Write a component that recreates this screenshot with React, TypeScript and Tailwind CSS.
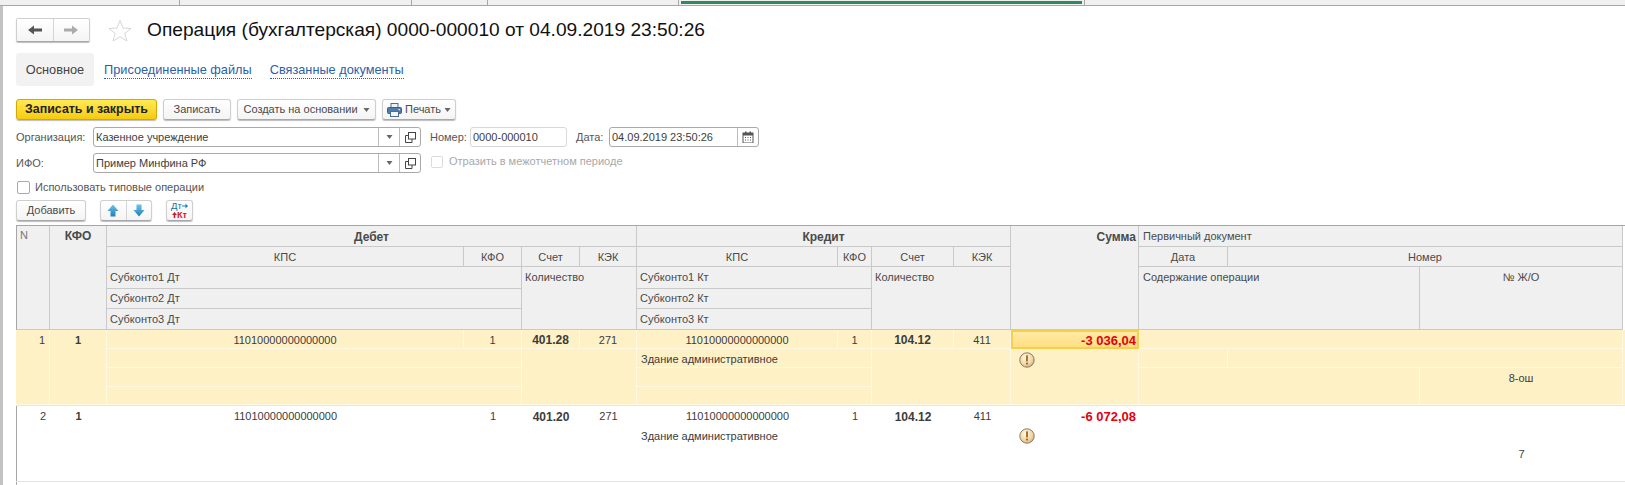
const gridCols = 'grid-cols-[34px_57px_357px_58px_58px_57px_201px_34px_82px_57px_128px_89px_192px_203px]';

const headCell = 'flex bg-[#f0f0f0] border-r border-b border-[#c9c9c9] text-[#4a4a4a] px-[4px] overflow-hidden whitespace-nowrap';

function Caret() {
  return (
    <svg width="7" height="4" viewBox="0 0 7 4" className="shrink-0">
      <path d="M0.5 0 L6.5 0 L3.5 4 Z" fill="#666" />
    </svg>
  );
}

function OpenIcon() {
  return (
    <svg width="11" height="11" viewBox="0 0 11 11" fill="none" stroke="#444" strokeWidth="1">
      <rect x="3.5" y="0.5" width="7" height="6.5" />
      <path d="M3.5 3.5 H0.5 V10.5 H7 V7" />
    </svg>
  );
}

function CalendarIcon() {
  return (
    <svg width="12" height="12" viewBox="0 0 12 12">
      <rect x="1" y="2" width="10" height="10" fill="#fff" stroke="#555" />
      <rect x="1" y="2" width="10" height="2.5" fill="#555" />
      <rect x="3" y="0.5" width="1.5" height="2.5" fill="#555" />
      <rect x="7.5" y="0.5" width="1.5" height="2.5" fill="#555" />
      <path d="M3 6 h1 v1 h-1z M5.5 6 h1 v1 h-1z M8 6 h1 v1 h-1z M3 8.5 h1 v1 h-1z M5.5 8.5 h1 v1 h-1z M8 8.5 h1 v1 h-1z" fill="#555" />
    </svg>
  );
}

function PrinterIcon() {
  return (
    <svg width="15" height="14" viewBox="0 0 15 14">
      <rect x="4" y="0.5" width="7" height="5" fill="#eef3f8" stroke="#4d6f94" />
      <rect x="0.5" y="4.5" width="14" height="6" rx="1" fill="#4f7eaa" stroke="#3b5f85" />
      <rect x="3.5" y="8.5" width="8" height="5" fill="#f5f5f5" stroke="#4d6f94" />
      <rect x="11.5" y="6" width="1.5" height="1.2" fill="#e8f0c0" />
    </svg>
  );
}

function WarnIcon() {
  return (
    <svg width="16" height="16" viewBox="0 0 16 16" className="ml-[4px] mt-[3px]">
      <defs>
        <radialGradient id="warnFill" cx="0.4" cy="0.35" r="0.75">
          <stop offset="0" stopColor="#fff8e6" />
          <stop offset="0.6" stopColor="#f0d7a6" />
          <stop offset="1" stopColor="#cfa468" />
        </radialGradient>
      </defs>
      <circle cx="8" cy="8" r="7.2" fill="url(#warnFill)" stroke="#8d7c62" strokeWidth="1" />
      <rect x="7.1" y="3.2" width="1.8" height="6.3" rx="0.6" fill="#a5641d" />
      <circle cx="8" cy="11.6" r="1.1" fill="#a5641d" />
    </svg>
  );
}

function BlockArrow({ down }: { down?: boolean }) {
  return (
    <svg width="12" height="13" viewBox="0 0 12 13">
      <defs>
        <linearGradient id={down ? 'arrowDown' : 'arrowUp'} x1="0" y1="0" x2="0" y2="1">
          <stop offset="0" stopColor="#6cc3ea" />
          <stop offset="1" stopColor="#1f7fb8" />
        </linearGradient>
      </defs>
      <path
        d={down ? 'M3.5 0.5 H8.5 V6 H11.5 L6 12.5 L0.5 6 H3.5 Z' : 'M6 0.5 L11.5 7 H8.5 V12.5 H3.5 V7 H0.5 Z'}
        fill={`url(#${down ? 'arrowDown' : 'arrowUp'})`}
      />
    </svg>
  );
}

function Button({ children, className }: { children: React.ReactNode; className: string }) {
  return (
    <div className={`flex items-center justify-center h-[21px] rounded-[3px] border border-[#cfcfcf] border-b-[#a8a8a8] bg-gradient-to-b from-white to-[#f4f4f4] shadow-[0_1px_1px_#bdbdbd] text-[#4a4a4a] ${className}`}>
      {children}
    </div>
  );
}

function SelectField({ value }: { value: string }) {
  return (
    <div className="flex w-[328px] h-[20px] rounded-[3px] border border-[#a9a9a9] bg-white text-[#3d3d3d]">
      <div className="flex-1 pl-[2px] leading-[18px]">{value}</div>
      <div className="flex w-[21px] items-center justify-center border-l border-[#bdbdbd]">
        <Caret />
      </div>
      <div className="flex w-[21px] items-center justify-center border-l border-[#bdbdbd]">
        <OpenIcon />
      </div>
    </div>
  );
}

function Header() {
  return (
    <div className={`grid ${gridCols} grid-rows-[21px_20px_22px_20px_21px] border-t border-[#a6a6a6]`}>
      <div className={`${headCell} col-start-1 row-start-1 row-span-5 border-l-[#a6a6a6] border-l pl-[3px] pt-[4px] text-[#777]`}>N</div>
      <div className={`${headCell} col-start-2 row-start-1 row-span-5 justify-center pt-[4px] font-bold text-[12px]`}>КФО</div>

      <div className={`${headCell} col-start-3 col-span-4 row-start-1 items-center justify-center pt-[1px] font-bold text-[12px]`}>Дебет</div>
      <div className={`${headCell} col-start-3 row-start-2 items-center justify-center pt-[1px]`}>КПС</div>
      <div className={`${headCell} col-start-4 row-start-2 items-center justify-center pt-[1px]`}>КФО</div>
      <div className={`${headCell} col-start-5 row-start-2 items-center justify-center pt-[1px]`}>Счет</div>
      <div className={`${headCell} col-start-6 row-start-2 items-center justify-center pt-[1px]`}>КЭК</div>
      <div className={`${headCell} col-start-3 col-span-2 row-start-3 items-center pl-[3px]`}>Субконто1 Дт</div>
      <div className={`${headCell} col-start-3 col-span-2 row-start-4 items-center pl-[3px]`}>Субконто2 Дт</div>
      <div className={`${headCell} col-start-3 col-span-2 row-start-5 items-center pl-[3px]`}>Субконто3 Дт</div>
      <div className={`${headCell} col-start-5 col-span-2 row-start-3 row-span-3 pl-[3px] pt-[5px]`}>Количество</div>

      <div className={`${headCell} col-start-7 col-span-4 row-start-1 items-center justify-center pt-[1px] font-bold text-[12px]`}>Кредит</div>
      <div className={`${headCell} col-start-7 row-start-2 items-center justify-center pt-[1px]`}>КПС</div>
      <div className={`${headCell} col-start-8 row-start-2 items-center justify-center px-0 pt-[1px]`}>КФО</div>
      <div className={`${headCell} col-start-9 row-start-2 items-center justify-center pt-[1px]`}>Счет</div>
      <div className={`${headCell} col-start-10 row-start-2 items-center justify-center pt-[1px]`}>КЭК</div>
      <div className={`${headCell} col-start-7 col-span-2 row-start-3 items-center pl-[3px]`}>Субконто1 Кт</div>
      <div className={`${headCell} col-start-7 col-span-2 row-start-4 items-center pl-[3px]`}>Субконто2 Кт</div>
      <div className={`${headCell} col-start-7 col-span-2 row-start-5 items-center pl-[3px]`}>Субконто3 Кт</div>
      <div className={`${headCell} col-start-9 col-span-2 row-start-3 row-span-3 pl-[3px] pt-[5px]`}>Количество</div>

      <div className={`${headCell} col-start-11 row-start-1 row-span-5 justify-end pr-[2px] pt-[5px] font-bold text-[12px]`}>Сумма</div>

      <div className={`${headCell} col-start-12 col-span-3 row-start-1 items-center`}>Первичный документ</div>
      <div className={`${headCell} col-start-12 row-start-2 items-center justify-center pt-[1px]`}>Дата</div>
      <div className={`${headCell} col-start-13 col-span-2 row-start-2 items-center justify-center pt-[1px]`}>Номер</div>
      <div className={`${headCell} col-start-12 col-span-2 row-start-3 row-span-3 pt-[5px]`}>Содержание операции</div>
      <div className={`${headCell} col-start-14 row-start-3 row-span-3 justify-center pt-[5px]`}>№ Ж/О</div>
    </div>
  );
}

type RowData = { n: string; debit: string; sum: string; journal: string; active?: boolean };

function Row({ n, debit, sum, journal, active }: RowData) {
  const cell = active
    ? 'flex overflow-hidden whitespace-nowrap border-r border-b border-[#fff8e2] px-[4px]'
    : 'flex overflow-hidden whitespace-nowrap px-[4px]';
  return (
    <div
      className={`grid ${gridCols} grid-rows-[19px_19px_19px_18px] border-b text-[#3c3c3c] ${
        active ? 'bg-[#fff1c6] border-[#e6e6e6]' : 'bg-white border-[#e3e3e3]'
      }`}
    >
      <div className={`${cell} col-start-1 row-start-1 row-span-4 justify-end pt-[5px] ${active ? '' : 'border-l border-[#a6a6a6]'}`}>{n}</div>
      <div className={`${cell} col-start-2 row-start-1 row-span-4 justify-center pt-[5px] font-bold`}>1</div>

      <div className={`${cell} col-start-3 row-start-1 items-center justify-center pt-[2px]`}>11010000000000000</div>
      <div className={`${cell} col-start-4 row-start-1 items-center justify-center pt-[2px]`}>1</div>
      <div className={`${cell} col-start-5 row-start-1 items-center justify-center pt-[2px] font-bold text-[12px]`}>{debit}</div>
      <div className={`${cell} col-start-6 row-start-1 items-center justify-center pt-[2px]`}>271</div>
      <div className={`${cell} col-start-3 col-span-2 row-start-2`} />
      <div className={`${cell} col-start-3 col-span-2 row-start-3`} />
      <div className={`${cell} col-start-3 col-span-2 row-start-4`} />
      <div className={`${cell} col-start-5 col-span-2 row-start-2 row-span-3`} />

      <div className={`${cell} col-start-7 row-start-1 items-center justify-center pt-[2px]`}>11010000000000000</div>
      <div className={`${cell} col-start-8 row-start-1 items-center justify-center pt-[2px]`}>1</div>
      <div className={`${cell} col-start-9 row-start-1 items-center justify-center pt-[2px] font-bold text-[12px]`}>104.12</div>
      <div className={`${cell} col-start-10 row-start-1 items-center justify-center pt-[2px]`}>411</div>
      <div className={`${cell} col-start-7 col-span-2 row-start-2 items-center pt-[3px]`}>Здание административное</div>
      <div className={`${cell} col-start-7 col-span-2 row-start-3`} />
      <div className={`${cell} col-start-7 col-span-2 row-start-4`} />
      <div className={`${cell} col-start-9 col-span-2 row-start-2 row-span-3`} />

      {active ? (
        <div className="col-start-11 row-start-1 flex items-center justify-end border-2 border-[#f6d04d] bg-gradient-to-b from-[#ffe9a3] to-[#ffdf80] pr-[1px] pt-[1px] font-bold text-[13px] text-[#e3000f]">
          {sum}
        </div>
      ) : (
        <div className="col-start-11 row-start-1 flex items-center justify-end pr-[3px] pt-[2px] font-bold text-[13px] text-[#e3000f]">
          {sum}
        </div>
      )}
      <div className={`${cell} col-start-11 row-start-2 row-span-3 px-0`}>
        <WarnIcon />
      </div>

      <div className={`${cell} col-start-12 col-span-3 row-start-1`} />
      <div className={`${cell} col-start-12 row-start-2`} />
      <div className={`${cell} col-start-13 col-span-2 row-start-2`} />
      <div className={`${cell} col-start-12 col-span-2 row-start-3 row-span-2`} />
      <div className={`${cell} col-start-14 row-start-3 row-span-2 justify-center pt-[5px]`}>{journal}</div>
    </div>
  );
}

export default function App() {
  return (
    <div className="flex flex-col w-[1625px] h-[485px] overflow-hidden bg-white font-['Liberation_Sans',Arial,sans-serif] text-[11px] leading-none">
      {/* Open windows strip */}
      <div className="flex h-[6px] shrink-0 bg-[#f0f0f0] border-b border-[#a8a8a8]">
        <div className="w-[180px] border-r border-[#a8a8a8]" />
        <div className="w-[232px] border-r border-[#a8a8a8]" />
        <div className="w-[76px] border-r border-[#a8a8a8]" />
        <div className="w-[191px] border-r border-[#a8a8a8]" />
        <div className="w-[406px] border-r border-[#a8a8a8] px-[2px]">
          <div className="h-[3px] mt-[1px] bg-[#2f8a63]" />
        </div>
      </div>

      <div className="flex flex-1 min-h-0">
        <div className="w-[3px] shrink-0 bg-[#c2c2c2]" />
        <div className="flex-1 pl-[13px]">
          {/* Title */}
          <div className="flex items-center h-[24px] mt-[12px]">
            <div className="flex w-[74px] h-[24px] rounded-[2px] border border-[#cfcfcf] border-b-[#a8a8a8] bg-gradient-to-b from-white to-[#f4f4f4] shadow-[0_1px_1px_#bdbdbd]">
              <div className="flex flex-1 items-center justify-center border-r border-[#d5d5d5]">
                <svg width="14" height="10" viewBox="0 0 14 10">
                  <path d="M0 5 L6 0.5 V3.5 H14 V6.5 H6 V9.5 Z" fill="#555" />
                </svg>
              </div>
              <div className="flex flex-1 items-center justify-center">
                <svg width="14" height="10" viewBox="0 0 14 10">
                  <path d="M14 5 L8 0.5 V3.5 H0 V6.5 H8 V9.5 Z" fill="#ababab" />
                </svg>
              </div>
            </div>
            <svg width="24" height="23" viewBox="0 0 24 23" className="ml-[18px]">
              <path d="M12 1.5 L15 9 L23 9.5 L16.8 14.4 L19 22 L12 17.8 L5 22 L7.2 14.4 L1 9.5 L9 9 Z" fill="#fff" stroke="#d6d6d6" strokeWidth="1" />
            </svg>
            <h1 className="ml-[15px] text-[19.15px] font-normal text-[#111]">Операция (бухгалтерская) 0000-000010 от 04.09.2019 23:50:26</h1>
          </div>

          {/* Tabs */}
          <div className="flex items-center h-[33px] mt-[11px] text-[12.75px]">
            <div className="flex items-center justify-center w-[78px] h-full rounded-[3px] bg-[#f2f2f2] pt-[1px] text-[#444]">Основное</div>
            <a className="ml-[10px] mt-[4px] text-[#2b5fa8] border-b border-dotted border-[#2b5fa8] pb-[1px]">Присоединенные файлы</a>
            <a className="ml-[18px] mt-[4px] text-[#2b5fa8] border-b border-dotted border-[#2b5fa8] pb-[1px]">Связанные документы</a>
          </div>

          {/* Command bar */}
          <div className="flex items-center h-[21px] mt-[13px]">
            <div className="flex items-center justify-center w-[141px] h-[21px] rounded-[3px] border border-[#d2a900] bg-gradient-to-b from-[#ffea50] to-[#f7cb00] shadow-[0_1px_1px_#bdbdbd] font-bold text-[12.4px] text-[#222]">
              Записать и закрыть
            </div>
            <Button className="w-[68px] ml-[6px]">Записать</Button>
            <Button className="w-[139px] ml-[6px] gap-[5px]">
              Создать на основании <Caret />
            </Button>
            <Button className="w-[74px] ml-[6px] gap-[3px]">
              <PrinterIcon /> Печать <Caret />
            </Button>
          </div>

          {/* Form fields */}
          <div className="flex items-center h-[20px] mt-[7px] text-[#555]">
            <div className="w-[77px]">Организация:</div>
            <SelectField value="Казенное учреждение" />
            <div className="w-[40px] ml-[9px]">Номер:</div>
            <div className="w-[97px] h-[20px] rounded-[3px] border border-[#d8d8d8] pl-[2px] leading-[18px] text-[#3d3d3d]">0000-000010</div>
            <div className="w-[33px] ml-[9px]">Дата:</div>
            <div className="flex w-[150px] h-[20px] rounded-[3px] border border-[#a9a9a9] text-[#3d3d3d]">
              <div className="flex-1 pl-[2px] leading-[18px]">04.09.2019 23:50:26</div>
              <div className="flex w-[21px] items-center justify-center border-l border-[#bdbdbd]">
                <CalendarIcon />
              </div>
            </div>
          </div>
          <div className="flex items-center h-[20px] mt-[6px] text-[#555]">
            <div className="w-[77px]">ИФО:</div>
            <SelectField value="Пример Минфина РФ" />
            <div className="w-[12px] h-[12px] ml-[10px] mb-[3px] rounded-[2px] border border-[#dcdcdc]" />
            <div className="ml-[6px] mb-[3px] text-[#a8a8a8]">Отразить в межотчетном периоде</div>
          </div>
          <div className="flex items-center h-[12px] mt-[8px] text-[#555]">
            <div className="w-[13px] h-[13px] ml-[1px] rounded-[2px] border border-[#a9a9a9]" />
            <div className="ml-[5px]">Использовать типовые операции</div>
          </div>

          {/* Table commands */}
          <div className="flex items-center h-[21px] mt-[7px]">
            <Button className="w-[70px]">Добавить</Button>
            <div className="flex w-[52px] h-[21px] ml-[14px] rounded-[3px] border border-[#cfcfcf] border-b-[#a8a8a8] bg-gradient-to-b from-white to-[#f4f4f4] shadow-[0_1px_1px_#bdbdbd]">
              <div className="flex flex-1 items-center justify-center border-r border-[#d5d5d5]">
                <BlockArrow />
              </div>
              <div className="flex flex-1 items-center justify-center">
                <BlockArrow down />
              </div>
            </div>
            <Button className="w-[27px] ml-[14px] flex-col gap-0">
              <span className="flex items-center text-[9.5px] text-[#1f6f9e]">
                Дт
                <svg width="6" height="6" viewBox="0 0 6 6"><path d="M0 2.5 H3.5 V0.5 L6 3 L3.5 5.5 V3.5 H0 Z" fill="#1f7fb8" /></svg>
              </span>
              <span className="flex items-center text-[9px] font-bold text-[#c8202a]">
                <svg width="5" height="6" viewBox="0 0 5 6"><path d="M2.5 0 L5 3 H3.3 V6 H1.7 V3 H0 Z" fill="#c8202a" /></svg>
                Кт
              </span>
            </Button>
          </div>

          {/* Entries table */}
          <div className="mt-[4px]">
            <Header />
            <Row n="1" debit="401.28" sum="-3 036,04" journal="8-ош" active />
            <Row n="2" debit="401.20" sum="-6 072,08" journal="7" />
            <div className="h-[10px] w-[1px] bg-[#a6a6a6]" />
          </div>
        </div>
      </div>
    </div>
  );
}
